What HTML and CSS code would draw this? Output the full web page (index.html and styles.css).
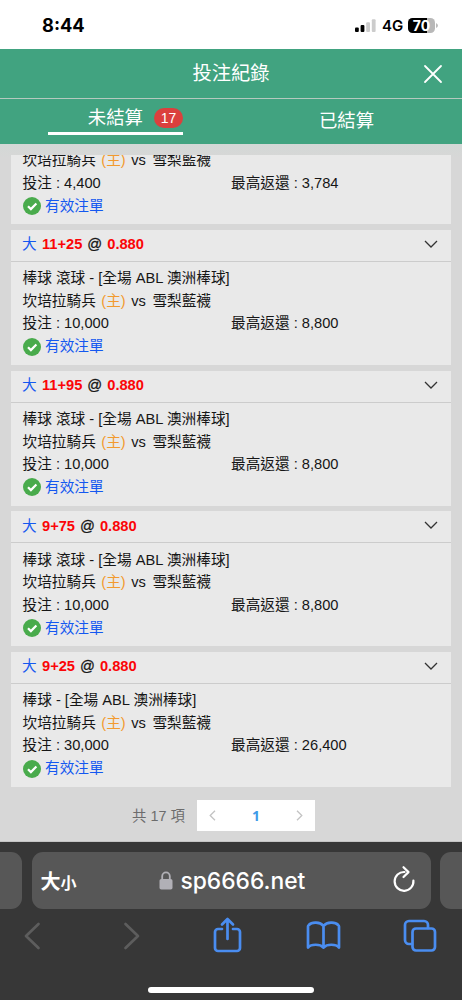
FILE: index.html
```
<!DOCTYPE html>
<html lang="zh-Hant">
<head>
<meta charset="utf-8">
<meta name="viewport" content="width=device-width, initial-scale=1">
<title>投注紀錄</title>
<link rel="stylesheet" href="styles.css">
</head>
<body>
<div class="phone">
  <div class="status">
    <span class="clock">8:44</span>
    <div class="signals">
      <svg class="bars" width="21" height="13" viewBox="0 0 21 13"><rect x="0" y="8.5" width="3.8" height="4.5" rx="1"/><rect x="5.6" y="6" width="3.8" height="7" rx="1"/><rect x="11.2" y="3.2" width="3.8" height="9.8" rx="1" fill="#ccc"/><rect x="16.8" y="0.3" width="3.8" height="12.7" rx="1" fill="#ccc"/></svg>
      <span class="net">4G</span>
      <div class="battery"><span class="level">70</span></div>
      <svg class="tip" width="2" height="5" viewBox="0 0 2 5"><path d="M0 0q2 1 2 2.500t-2 2.500z" fill="#bbb"/></svg>
    </div>
  </div>

  <header class="title-bar">
    <h1 class="title">投注紀錄</h1>
    <svg class="close" width="18" height="18" viewBox="0 0 18 18"><path d="M1 1l16 16M17 1L1 17"/></svg>
  </header>
  <nav class="tabs">
    <div class="tab active"><div class="tab-inner"><span>未結算</span><span class="badge">17</span></div></div>
    <div class="tab"><span>已結算</span></div>
  </nav>

  <main class="content">
    <div class="list">
      <section class="card scrolled">
        <div class="card-body">
          <div class="row teams"><span>坎培拉騎兵</span><span class="home">(主)</span><span>vs</span><span class="away">雪梨藍襪</span></div>
          <div class="row money"><span>投注 : 4,400</span><span>最高返還 : 3,784</span></div>
          <div class="row valid"><svg class="check" width="18" height="18" viewBox="0 0 18 18"><circle cx="9" cy="9" r="9"/><path d="M5 9.200l2.900 2.900 5.500-5.600"/></svg><span>有效注單</span></div>
        </div>
      </section>
      <section class="card">
        <div class="card-head"><span class="pick">大</span><span class="odds">11+25</span><span class="at">@</span><span class="odds">0.880</span><svg class="chev" width="14" height="8" viewBox="0 0 14 8"><path d="M1 1l6 6 6-6"/></svg></div>
        <div class="card-body">
          <div class="row">棒球 滾球 - [全場 ABL 澳洲棒球]</div>
          <div class="row teams"><span>坎培拉騎兵</span><span class="home">(主)</span><span>vs</span><span class="away">雪梨藍襪</span></div>
          <div class="row money"><span>投注 : 10,000</span><span>最高返還 : 8,800</span></div>
          <div class="row valid"><svg class="check" width="18" height="18" viewBox="0 0 18 18"><circle cx="9" cy="9" r="9"/><path d="M5 9.200l2.900 2.900 5.500-5.600"/></svg><span>有效注單</span></div>
        </div>
      </section>
      <section class="card">
        <div class="card-head"><span class="pick">大</span><span class="odds">11+95</span><span class="at">@</span><span class="odds">0.880</span><svg class="chev" width="14" height="8" viewBox="0 0 14 8"><path d="M1 1l6 6 6-6"/></svg></div>
        <div class="card-body">
          <div class="row">棒球 滾球 - [全場 ABL 澳洲棒球]</div>
          <div class="row teams"><span>坎培拉騎兵</span><span class="home">(主)</span><span>vs</span><span class="away">雪梨藍襪</span></div>
          <div class="row money"><span>投注 : 10,000</span><span>最高返還 : 8,800</span></div>
          <div class="row valid"><svg class="check" width="18" height="18" viewBox="0 0 18 18"><circle cx="9" cy="9" r="9"/><path d="M5 9.200l2.900 2.900 5.500-5.600"/></svg><span>有效注單</span></div>
        </div>
      </section>
      <section class="card">
        <div class="card-head"><span class="pick">大</span><span class="odds">9+75</span><span class="at">@</span><span class="odds">0.880</span><svg class="chev" width="14" height="8" viewBox="0 0 14 8"><path d="M1 1l6 6 6-6"/></svg></div>
        <div class="card-body">
          <div class="row">棒球 滾球 - [全場 ABL 澳洲棒球]</div>
          <div class="row teams"><span>坎培拉騎兵</span><span class="home">(主)</span><span>vs</span><span class="away">雪梨藍襪</span></div>
          <div class="row money"><span>投注 : 10,000</span><span>最高返還 : 8,800</span></div>
          <div class="row valid"><svg class="check" width="18" height="18" viewBox="0 0 18 18"><circle cx="9" cy="9" r="9"/><path d="M5 9.200l2.900 2.900 5.500-5.600"/></svg><span>有效注單</span></div>
        </div>
      </section>
      <section class="card">
        <div class="card-head"><span class="pick">大</span><span class="odds">9+25</span><span class="at">@</span><span class="odds">0.880</span><svg class="chev" width="14" height="8" viewBox="0 0 14 8"><path d="M1 1l6 6 6-6"/></svg></div>
        <div class="card-body">
          <div class="row">棒球 - [全場 ABL 澳洲棒球]</div>
          <div class="row teams"><span>坎培拉騎兵</span><span class="home">(主)</span><span>vs</span><span class="away">雪梨藍襪</span></div>
          <div class="row money"><span>投注 : 30,000</span><span>最高返還 : 26,400</span></div>
          <div class="row valid"><svg class="check" width="18" height="18" viewBox="0 0 18 18"><circle cx="9" cy="9" r="9"/><path d="M5 9.200l2.900 2.900 5.500-5.600"/></svg><span>有效注單</span></div>
        </div>
      </section>
    </div>
    <div class="pager">
      <span class="total">共 17 項</span>
      <div class="pages">
        <svg width="7" height="11" viewBox="0 0 7 11"><path d="M6 .700L1.200 5.500 6 10.300"/></svg>
        <span class="page">1</span>
        <svg width="7" height="11" viewBox="0 0 7 11"><path d="M1 .700l4.800 4.800L1 10.300"/></svg>
      </div>
    </div>
  </main>

  <footer class="browser">
    <div class="address-row">
      <div class="side left"></div>
      <div class="address">
        <span class="size"><span>大</span><span class="small">小</span></span>
        <svg class="lock" width="14" height="19" viewBox="0 0 14 19"><path d="M3.200 9V5.200a3.800 3.800 0 0 1 7.600 0V9" fill="none" stroke="#b1b0b6" stroke-width="1.800"/><rect x=".5" y="8" width="13" height="10.500" rx="1.800" fill="#b1b0b6"/></svg>
        <span class="host">sp6666.net</span>
        <svg class="reload" width="22" height="26" viewBox="0 0 22 26"><path d="M11.500 6A9.400 9.400 0 1 0 20.400 14.600M10.500 1.200l5 4.900-5 4.900"/></svg>
      </div>
      <div class="side right"></div>
    </div>
    <div class="tools">
      <svg class="tool dim" width="16" height="28" viewBox="0 0 16 28"><path d="M14.500 2L2 14l12.500 12"/></svg>
      <svg class="tool dim" width="16" height="28" viewBox="0 0 16 28"><path d="M1.500 2L14 14 1.500 26"/></svg>
      <svg class="tool share" width="29" height="36" viewBox="0 0 29 36"><path d="M9 12H5a3 3 0 0 0-3 3v16a3 3 0 0 0 3 3h19a3 3 0 0 0 3-3V15a3 3 0 0 0-3-3h-4M14.500 22V2.200M9 7.500l5.500-5.500 5.500 5.500"/></svg>
      <svg class="tool" width="35" height="30" viewBox="0 0 35 30"><path d="M17.500 5C14 .800 6 .600 2.800 4a2 2 0 0 0-.800 1.600v21c3.200-3.800 12-3.800 15.500 0V5c3.500-4.200 11.500-4.400 14.700-1a2 2 0 0 1 .800 1.600v21c-3.200-3.800-12-3.800-15.500 0"/></svg>
      <svg class="tool" width="34" height="34" viewBox="0 0 34 34"><path d="M9 25H6a4 4 0 0 1-4-4V6a4 4 0 0 1 4-4h15a4 4 0 0 1 4 4v3"/><rect x="9.500" y="9.500" width="22.500" height="22" rx="3.500"/></svg>
    </div>
    <div class="home-bar"></div>
  </footer>
</div>
</body>
</html>
```
FILE: styles.css
```
* { box-sizing: border-box; }
body { margin: 0; font-family: "Liberation Sans", "Noto Sans CJK TC", sans-serif; color: #161616; }
svg { display: block; flex: none; overflow: visible; }
.phone { width: 462px; height: 1000px; overflow: hidden; display: flex; flex-direction: column; background: #d7d7d7; }

.status { flex: none; height: 49px; display: flex; justify-content: space-between; padding: 15px 24px 0 42px; background: #fff; color: #000; font-family: Inter, "Liberation Sans", sans-serif; }
.clock { font-size: 18.3px; font-weight: 700; line-height: 21px; }
.signals { display: flex; align-items: center; height: 21px; }
.net { margin-left: 6px; font-size: 15px; font-weight: 600; line-height: 21px; width: 21px; }
.battery { margin-left: 5px; width: 27px; height: 15px; border-radius: 4.5px; background: linear-gradient(90deg, #000 70%, #b8b8b8 70%); color: #fff; text-align: center; }
.level { display: block; font-size: 14px; font-weight: 700; line-height: 15px; }
.tip { margin-left: 1px; }

.title-bar { flex: none; height: 50px; display: grid; grid-template-columns: 1fr auto 1fr; align-items: center; background: #41a380; color: #fff; border-bottom: 1px solid #b5c9bf; }
.title { grid-column: 2; margin: 0; font-size: 19.3px; line-height: 28px; font-weight: 400; }
.close { grid-column: 3; justify-self: end; margin-right: 20px; }
.close path { fill: none; stroke: #fff; stroke-width: 1.8; stroke-linecap: round; }
.tabs { flex: none; height: 45px; display: grid; grid-template-columns: 1fr 1fr; background: #41a380; color: #fff; font-size: 18.4px; }
.tab { display: flex; justify-content: center; padding-top: 8px; line-height: 28px; }
.tab.active { padding-top: 5px; }
.tab-inner { width: 135px; height: 31px; border-bottom: 3.500px solid #fff; display: flex; justify-content: flex-end; align-items: flex-start; }
.badge { margin: 4px 0 0 11px; width: 29px; height: 20px; border-radius: 10px; background: #db403d; font-size: 14px; line-height: 20px; text-align: center; }

.content { flex: none; height: 698px; background: linear-gradient(#d3d8d6, #d7d7d7 14px); padding: 11px 11px 0; border-bottom: 1px solid #c4c4c4; }
.list { height: 632px; }
.card { height: 135px; margin-bottom: 5.67px; background: #e9e9e9; }
.card-head { display: flex; align-items: center; height: 32px; padding: 0 13.500px 2px 11px; border-bottom: 1px solid #ccc; font-size: 14.67px; line-height: 22px; }
.pick { color: #1458f0; width: 20px; font-size: 14.67px; }
.odds { color: #fb0507; font-weight: 700; }
.at { margin: 0 5px; -webkit-text-stroke: .3px #161616; }
.chev { margin: 0 0 1px auto; }
.chev path { fill: none; stroke: #333; stroke-width: 1.3; }
.card-body { padding: 5.500px 11px 0 11.500px; font-size: 14.67px; }
.scrolled { height: 69.33px; overflow: hidden; }
.scrolled .card-body { padding-top: 0; margin-top: -5.700px; }
.row { height: 22.5px; line-height: 22.5px; white-space: nowrap; }
.teams { display: flex; }
.home { color: #f29a2e; margin: 0 5.500px; }
.away { margin-left: 6.500px; }
.money { display: grid; grid-template-columns: 208.500px 1fr; }
.valid { display: flex; align-items: center; color: #1458f0; padding-top: 1px; }
.check { margin-right: 4.500px; }
.check circle { fill: #49ab4c; }
.check path { fill: none; stroke: #fff; stroke-width: 2.2; }

.pager { display: flex; align-items: center; margin: 13px 0 0 121px; height: 31px; font-size: 14.4px; color: #6c6c6c; }
.total { width: 65px; padding-bottom: 2px; white-space: nowrap; }
.pages { width: 118px; height: 31px; padding: 0 12px; display: flex; align-items: center; justify-content: space-between; background: #fff; }
.pages path { fill: none; stroke: #c3c3c3; stroke-width: 1.3; }
.page { color: #409ae8; font: 700 14px/20px "Noto Sans", sans-serif; }

.browser { flex: none; height: 158px; padding-top: 10px; background: #373737; display: flex; flex-direction: column; align-items: center; }
.address-row { flex: none; width: 100%; height: 57px; display: grid; grid-template-columns: 22px 399px 22px; column-gap: 9.500px; }
.side { background: #575757; }
.left { border-radius: 0 11px 11px 0; }
.right { border-radius: 11px 0 0 11px; }
.address { display: flex; align-items: center; padding: 0 16px 0 9px; border-radius: 11px; background: #575757; color: #fff; }
.size { width: 118px; font-family: "Noto Sans CJK TC", sans-serif; font-size: 20px; font-weight: 700; }
.small { font-size: 16px; }
.host { margin-left: 8px; font: 500 22.8px/30px Inter, sans-serif; }
.reload { margin-left: auto; margin-bottom: 4px; }
.reload path { fill: none; stroke: #fff; stroke-width: 2.2; stroke-linecap: round; stroke-linejoin: round; }
.tools { width: 100%; height: 54px; display: grid; grid-template-columns: 100px 88.500px 93.500px 96.500px 34px; align-items: center; padding-left: 24px; }
.tool path, .tool rect { fill: none; stroke: #4a8df0; stroke-width: 2.7; stroke-linecap: round; stroke-linejoin: round; }
.share { margin-bottom: 3px; }
.dim path { stroke: #5d5d5d; }
.home-bar { margin-top: 24px; width: 166px; height: 6px; border-radius: 3px; background: #fff; }
```
